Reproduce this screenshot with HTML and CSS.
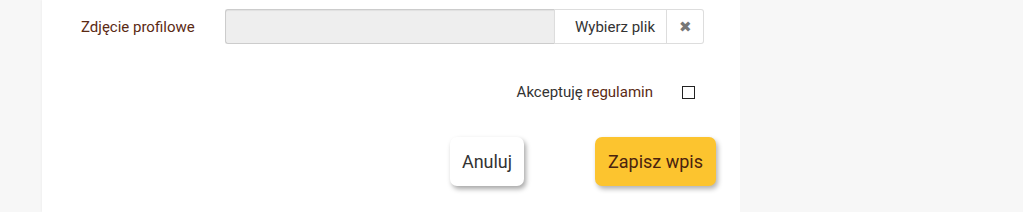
FILE: index.html
```html
<!DOCTYPE html>
<html lang="pl">
<head>
    <meta charset="UTF-8">
    <title>Formularz wpisu</title>
    <link rel="stylesheet" href="styles.css">
</head>
<body>

<div class="page">
    <div class="card">
        <!--zdjecie-->
        <div class="form-row">
            <label class="form-label">Zdjęcie profilowe</label>
            <div class="file-group">
                <div class="file-name"></div>
                <span class="file-btn">Wybierz plik</span>
                <span class="file-clear">&#10006;</span>
            </div>
        </div>

        <!--regulamin-->
        <div class="terms-row">
            <span class="terms-text">Akceptuję <span class="terms-link">regulamin</span></span>
            <span class="checkbox"></span>
        </div>

        <!--przyciski-->
        <div class="actions">
            <button class="btn btn-cancel">Anuluj</button>
            <button class="btn btn-save">Zapisz wpis</button>
        </div>
    </div>
    <div class="side"></div>
</div>

</body>
</html>
```

FILE: styles.css
```css
* {
    margin: 0;
    padding: 0;
    box-sizing: border-box;
}

body {
    background-color: #f7f7f7;
    font-family: Roboto, "Liberation Sans", sans-serif;
    color: #333;
}

.page {
    display: flex;
    height: 212px;
    overflow: hidden;
}

/*bialy formularz*/
.card {
    width: 698px;
    margin-left: 42px;
    background-color: #fff;
    box-shadow: -1px 0 2px rgba(0, 0, 0, 0.03);
}

.side {
    flex: 1;
}

.form-row {
    display: flex;
    align-items: center;
    padding: 9px 0 0 39px;
}

.form-label {
    width: 144px;
    font-size: 15px;
    color: #5b2a14;
}

.file-group {
    display: flex;
    width: 479px;
    height: 35px;
}

.file-name {
    flex: 1;
    background-color: #eee;
    border: 1px solid #ccc;
    border-right: none;
    border-radius: 3px 0 0 3px;
    box-shadow: inset 0 1px 1px rgba(0, 0, 0, 0.06);
}

.file-btn {
    display: flex;
    align-items: center;
    padding: 0 11px 0 20px;
    font-size: 15px;
    color: #333;
    border: 1px solid #ddd;
    background-color: #fff;
}

.file-clear {
    display: flex;
    align-items: center;
    justify-content: center;
    width: 37px;
    font-size: 15px;
    color: #777;
    border: 1px solid #ddd;
    border-left: none;
    border-radius: 0 3px 3px 0;
    background-color: #fff;
}

.terms-row {
    display: flex;
    align-items: center;
    justify-content: flex-end;
    height: 16px;
    margin-top: 40px;
    padding-right: 45px;
}

.terms-text {
    font-size: 15px;
    color: #333;
}

.terms-link {
    color: #5b2a14;
}

.checkbox {
    width: 13px;
    height: 13px;
    margin-left: 29px;
    border: 1px solid #222;
    background-color: #fff;
}

.actions {
    display: flex;
    justify-content: flex-end;
    align-items: center;
    margin-top: 37px;
    padding-right: 24px;
}

.btn {
    font-family: Roboto, "Liberation Sans", sans-serif;
    font-size: 18px;
    height: 49px;
    border: none;
    border-radius: 7px;
    box-shadow: 2px 3px 5px rgba(0, 0, 0, 0.35);
}

.btn-cancel {
    width: 74px;
    background-color: #fff;
    color: #333;
}

.btn-save {
    width: 121px;
    margin-left: 71px;
    background-color: #fcc42f;
    color: #4a230e;
    box-shadow: 2px 3px 5px rgba(0, 0, 0, 0.3);
}
```
